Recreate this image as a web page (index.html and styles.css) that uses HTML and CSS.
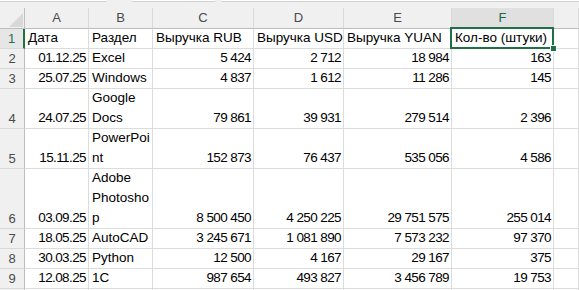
FILE: index.html
```html
<!DOCTYPE html>
<html lang="ru">
<head>
<meta charset="utf-8">
<title>Sheet</title>
<link rel="stylesheet" href="styles.css">
</head>
<body>
<div class="topbar">
  <div class="tb tb1"></div>
  <div class="tb tb2"></div>
  <div class="tb tb3"></div>
</div>
<div class="sheet">
  <div class="hd corner"><svg width="14" height="14" viewBox="0 0 14 14"><polygon points="14,0 14,14 0,14" fill="#d8d8d8"/></svg></div>
  <div class="hd">A</div>
  <div class="hd">B</div>
  <div class="hd">C</div>
  <div class="hd">D</div>
  <div class="hd">E</div>
  <div class="hd on">F</div>
  <div class="hd"></div>

  <div class="rh on">1</div>
  <div class="c">Дата</div>
  <div class="c">Раздел</div>
  <div class="c">Выручка RUB</div>
  <div class="c">Выручка USD</div>
  <div class="c">Выручка YUAN</div>
  <div class="c sel">Кол-во (штуки)<span class="selbox"><span class="handle"></span></span></div>
  <div class="c"></div>

  <div class="rh">2</div>
  <div class="c num">01.12.25</div>
  <div class="c">Excel</div>
  <div class="c num">5&nbsp;424</div>
  <div class="c num">2&nbsp;712</div>
  <div class="c num">18&nbsp;984</div>
  <div class="c num">163</div>
  <div class="c"></div>

  <div class="rh">3</div>
  <div class="c num">25.07.25</div>
  <div class="c">Windows</div>
  <div class="c num">4&nbsp;837</div>
  <div class="c num">1&nbsp;612</div>
  <div class="c num">11&nbsp;286</div>
  <div class="c num">145</div>
  <div class="c"></div>

  <div class="rh">4</div>
  <div class="c num">24.07.25</div>
  <div class="c">Google<br>Docs</div>
  <div class="c num">79&nbsp;861</div>
  <div class="c num">39&nbsp;931</div>
  <div class="c num">279&nbsp;514</div>
  <div class="c num">2&nbsp;396</div>
  <div class="c"></div>

  <div class="rh">5</div>
  <div class="c num">15.11.25</div>
  <div class="c">PowerPoi<br>nt</div>
  <div class="c num">152&nbsp;873</div>
  <div class="c num">76&nbsp;437</div>
  <div class="c num">535&nbsp;056</div>
  <div class="c num">4&nbsp;586</div>
  <div class="c"></div>

  <div class="rh">6</div>
  <div class="c num">03.09.25</div>
  <div class="c">Adobe<br>Photosho<br>p</div>
  <div class="c num">8&nbsp;500&nbsp;450</div>
  <div class="c num">4&nbsp;250&nbsp;225</div>
  <div class="c num">29&nbsp;751&nbsp;575</div>
  <div class="c num">255&nbsp;014</div>
  <div class="c"></div>

  <div class="rh">7</div>
  <div class="c num">18.05.25</div>
  <div class="c">AutoCAD</div>
  <div class="c num">3&nbsp;245&nbsp;671</div>
  <div class="c num">1&nbsp;081&nbsp;890</div>
  <div class="c num">7&nbsp;573&nbsp;232</div>
  <div class="c num">97&nbsp;370</div>
  <div class="c"></div>

  <div class="rh">8</div>
  <div class="c num">30.03.25</div>
  <div class="c">Python</div>
  <div class="c num">12&nbsp;500</div>
  <div class="c num">4&nbsp;167</div>
  <div class="c num">29&nbsp;167</div>
  <div class="c num">375</div>
  <div class="c"></div>

  <div class="rh">9</div>
  <div class="c num">12.08.25</div>
  <div class="c">1C</div>
  <div class="c num">987&nbsp;654</div>
  <div class="c num">493&nbsp;827</div>
  <div class="c num">3&nbsp;456&nbsp;789</div>
  <div class="c num">19&nbsp;753</div>
  <div class="c"></div>

  <div class="rh"></div>
  <div class="c"></div>
  <div class="c"></div>
  <div class="c"></div>
  <div class="c"></div>
  <div class="c"></div>
  <div class="c"></div>
  <div class="c"></div>
</div>
</body>
</html>
```
FILE: styles.css
```css
html, body {
  margin: 0;
  padding: 0;
  background: #ffffff;
  overflow: hidden;
}
body {
  font-family: "Liberation Sans", Arial, sans-serif;
  color: #000;
}
.topbar {
  height: 8px;
  background: #f0f0f0;
  display: flex;
  align-items: flex-start;
}
.tb {
  height: 1px;
  background: #ffffff;
  border-bottom: 1px solid #d2d2d2;
}
.tb1 { width: 107px; border-bottom-right-radius: 3px; }
.tb2 { width: 85px; margin-left: 24px; border-bottom-left-radius: 3px; border-bottom-right-radius: 3px; }
.tb3 { flex: 1; margin-left: 5px; border-bottom-left-radius: 3px; }

.sheet {
  display: grid;
  grid-template-columns: 25px 64px 64px 101px 90px 108px 102px 1fr;
  grid-template-rows: 21px 20px 20px 20px 40px 40px 60px 20px 20px 20px 20px;
}
.sheet > div {
  box-sizing: border-box;
  display: flex;
  min-width: 0;
}
.hd {
  background: #f0f0f0;
  border-right: 1px solid #d9d9d9;
  border-bottom: 1px solid #bdbdbd;
  align-items: center;
  justify-content: center;
  font-size: 13px;
  color: #4a4a4a;
  line-height: 20px;
}
.hd.on {
  background: #e0e0e0;
  color: #1d6b40;
}
.corner {
  align-items: flex-end;
  justify-content: flex-end;
  padding: 0 1px 1px 0;
  border-right-color: #bdbdbd;
}
.corner svg { display: block; }
.rh {
  background: #f0f0f0;
  border-right: 1px solid #bdbdbd;
  border-bottom: 1px solid #d9d9d9;
  align-items: flex-end;
  justify-content: center;
  font-size: 13px;
  line-height: 19px;
  color: #4a4a4a;
}
.rh.on {
  border-right: 2px solid #1f7145;
  color: #1f6f54;
  background: #e6e6e6;
}
.c {
  border-right: 1px solid #dcdcdc;
  border-bottom: 1px solid #dcdcdc;
  align-items: flex-end;
  padding: 0 2px 0 3px;
  font-size: 13.5px;
  line-height: 20px;
  white-space: nowrap;
  overflow: hidden;
}
.num {
  justify-content: flex-end;
  letter-spacing: -0.6px;
  padding-right: 2px;
}
.sel {
  position: relative;
  overflow: visible;
}
.selbox {
  position: absolute;
  left: -2px;
  top: -2px;
  right: -1px;
  bottom: -1px;
  border: 2px solid #1f7145;
  pointer-events: none;
}
.handle {
  position: absolute;
  right: -5px;
  bottom: -5px;
  width: 5px;
  height: 5px;
  background: #1f7145;
  border: 1px solid #ffffff;
}
```
